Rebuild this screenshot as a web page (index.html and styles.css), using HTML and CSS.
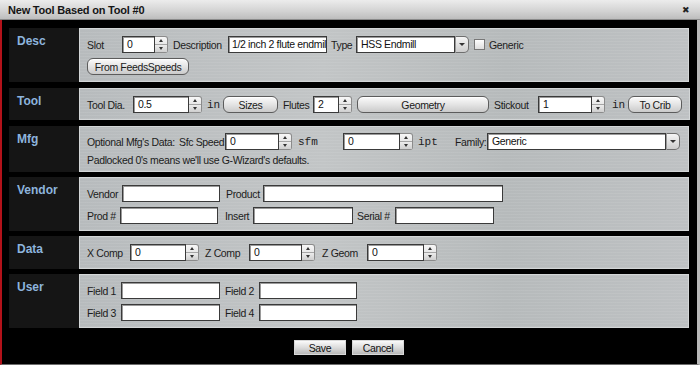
FILE: index.html
```html
<!DOCTYPE html>
<html lang="en">
<head>
    <meta charset="UTF-8">
    <meta name="viewport" content="width=device-width, initial-scale=1.0">
    <link rel="stylesheet" href="styles.css">
    <title>New Tool Based on Tool #0</title>
</head>
<body>
<div class="dialog">
    <div class="titlebar">
        <span class="title">New Tool Based on Tool #0</span>
        <span class="close">&#x2716;</span>
    </div>

    <div class="content">
        <!-- Desc -->
        <div class="section spaced">
            <div class="section-name">Desc</div>
            <div class="panel">
                <div class="line cols-desc">
                    <span class="lbl">Slot</span>
                    <div class="spin w46"><span class="field">0</span><span class="arrows"><i class="up"></i><i class="dn"></i></span></div>
                    <span class="lbl">Description</span>
                    <span class="field w99 clip">1/2 inch 2 flute endmill</span>
                    <span class="lbl">Type</span>
                    <div class="select w113"><span class="field">HSS Endmill</span><span class="drop"><i class="dn"></i></span></div>
                    <span class="check"></span>
                    <span class="lbl">Generic</span>
                </div>
                <div class="line">
                    <span class="btn w102">From FeedsSpeeds</span>
                </div>
            </div>
        </div>

        <!-- Tool -->
        <div class="section spaced">
            <div class="section-name">Tool</div>
            <div class="panel">
                <div class="line cols-tool">
                    <span class="lbl">Tool Dia.</span>
                    <div class="spin w69"><span class="field">0.5</span><span class="arrows"><i class="up"></i><i class="dn"></i></span></div>
                    <span class="unit">in</span>
                    <span class="btn w55">Sizes</span>
                    <span class="lbl">Flutes</span>
                    <div class="spin w39"><span class="field">2</span><span class="arrows"><i class="up"></i><i class="dn"></i></span></div>
                    <span class="btn w132">Geometry</span>
                    <span class="lbl">Stickout</span>
                    <div class="spin w67"><span class="field">1</span><span class="arrows"><i class="up"></i><i class="dn"></i></span></div>
                    <span class="unit">in</span>
                    <span class="btn w54">To Crib</span>
                </div>
            </div>
        </div>

        <!-- Mfg -->
        <div class="section">
            <div class="section-name">Mfg</div>
            <div class="panel panel-mfg">
                <div class="line cols-mfg">
                    <span class="lbl">Optional Mfg's Data:</span>
                    <span class="lbl">Sfc Speed</span>
                    <div class="spin w67"><span class="field">0</span><span class="arrows"><i class="up"></i><i class="dn"></i></span></div>
                    <span class="unit">sfm</span>
                    <div class="spin w70"><span class="field">0</span><span class="arrows"><i class="up"></i><i class="dn"></i></span></div>
                    <span class="unit">ipt</span>
                    <span class="lbl">Family:</span>
                    <div class="select w193"><span class="field">Generic</span><span class="drop"><i class="dn"></i></span></div>
                </div>
                <div class="line line-note">
                    <span class="lbl">Padlocked 0's means we'll use G-Wizard's defaults.</span>
                </div>
            </div>
        </div>

        <!-- Vendor -->
        <div class="section">
            <div class="section-name">Vendor</div>
            <div class="panel">
                <div class="line cols-vendor1">
                    <span class="lbl">Vendor</span>
                    <span class="field w98"></span>
                    <span class="lbl">Product</span>
                    <span class="field w240"></span>
                </div>
                <div class="line cols-vendor2">
                    <span class="lbl">Prod #</span>
                    <span class="field w98"></span>
                    <span class="lbl">Insert</span>
                    <span class="field w100"></span>
                    <span class="lbl">Serial #</span>
                    <span class="field w99"></span>
                </div>
            </div>
        </div>

        <!-- Data -->
        <div class="section">
            <div class="section-name">Data</div>
            <div class="panel panel-single">
                <div class="line cols-data">
                    <span class="lbl">X Comp</span>
                    <div class="spin w69"><span class="field">0</span><span class="arrows"><i class="up"></i><i class="dn"></i></span></div>
                    <span class="lbl">Z Comp</span>
                    <div class="spin w66"><span class="field">0</span><span class="arrows"><i class="up"></i><i class="dn"></i></span></div>
                    <span class="lbl">Z Geom</span>
                    <div class="spin w70"><span class="field">0</span><span class="arrows"><i class="up"></i><i class="dn"></i></span></div>
                </div>
            </div>
        </div>

        <!-- User -->
        <div class="section">
            <div class="section-name">User</div>
            <div class="panel">
                <div class="line cols-user">
                    <span class="lbl">Field 1</span>
                    <span class="field w99"></span>
                    <span class="lbl">Field 2</span>
                    <span class="field w98"></span>
                </div>
                <div class="line cols-user">
                    <span class="lbl">Field 3</span>
                    <span class="field w99"></span>
                    <span class="lbl">Field 4</span>
                    <span class="field w98"></span>
                </div>
            </div>
        </div>

        <div class="footer">
            <span class="flat-btn">Save</span>
            <span class="flat-btn">Cancel</span>
        </div>
    </div>
</div>
</body>
</html>
```

FILE: styles.css
```css
body {
    margin: 0;
    background: #000;
    font-family: "Liberation Sans", Arial, sans-serif;
    font-size: 10.5px;
    letter-spacing: -0.35px;
    color: #1a1a1a;
}

.dialog {
    width: 700px;
    height: 365px;
    display: flex;
    flex-direction: column;
}

/* Title bar */
.titlebar {
    height: 20px;
    flex: none;
    display: flex;
    align-items: center;
    justify-content: space-between;
    padding: 0 10px 0 8px;
    background: linear-gradient(#ececec, #d2d2d2 60%, #bdbdbd);
    border-bottom: 1px solid #8a8a8a;
    box-sizing: border-box;
}

.title {
    font-weight: bold;
    font-size: 11px;
    letter-spacing: -0.2px;
    color: #151515;
}

.close {
    font-size: 9px;
    color: #222;
}

/* Main area */
.content {
    flex: 1;
    display: flex;
    flex-direction: column;
    gap: 5px;
    padding: 8px 8px 0 7px;
    border-left: 2px solid #b3121a;
    border-right: 3px solid #b9b9b9;
    border-bottom: 1px solid #6d6d6d;
    background: #000;
}

.section {
    display: flex;
}

.spaced {
    margin-bottom: 1px;
}

.section-name {
    width: 70px;
    flex: none;
    background: #151515;
    color: #8db4dd;
    font-weight: bold;
    font-size: 12px;
    letter-spacing: 0;
    padding: 6px 0 0 8px;
    box-sizing: border-box;
}

.panel {
    flex: 1;
    display: flex;
    flex-direction: column;
    gap: 5px;
    padding: 7px 7px 6px 7px;
    border: 1px solid #d3d6d7;
    background:
        repeating-linear-gradient(0deg, rgba(255, 255, 255, 0.07) 0 1px, transparent 1px 3px),
        linear-gradient(90deg, #b7bbbd, #c2c5c6 40%, #b6babb 70%, #bec1c3);
}

.panel-single {
    padding-bottom: 7px;
}

.panel-mfg {
    gap: 3px;
    padding-top: 6px;
    padding-bottom: 5px;
}

.line {
    height: 17px;
    display: grid;
    align-items: center;
    justify-items: start;
    grid-auto-flow: column;
}

.line-note {
    height: 13px;
}

.cols-desc    { grid-template-columns: 35px 51px 55px 103px 25px 118px 15px auto; }
.cols-tool    { grid-template-columns: 46px 74px 16px 60px 30px 44px 137px 44px 74px 16px auto; }
.cols-mfg     { grid-template-columns: 92px 46px 73px 45px 75px 37px 32px auto; }
.cols-vendor1 { grid-template-columns: 35px 104px 37px auto; }
.cols-vendor2 { grid-template-columns: 33px 105px 28px 104px 38px auto; }
.cols-data    { grid-template-columns: 43px 75px 44px 73px 45px auto; }
.cols-user    { grid-template-columns: 34px 104px 34px auto; }

.lbl {
    white-space: nowrap;
    color: #1c1c1c;
}

.unit {
    font-family: "Liberation Mono", "Courier New", monospace;
    font-size: 11px;
    letter-spacing: 0;
    color: #222;
}

/* Inputs */
.field {
    height: 17px;
    box-sizing: border-box;
    background: #fff;
    border: 1px solid #3a3a3a;
    box-shadow: inset 1px 1px 0 #9a9a9a;
    padding: 0 3px 0 4px;
    line-height: 15px;
    color: #111;
    white-space: nowrap;
    overflow: hidden;
}

.clip {
    padding-left: 3px;
    padding-right: 0;
    text-overflow: clip;
}

.spin,
.select {
    display: flex;
    height: 17px;
}

.spin .field,
.select .field {
    flex: 1;
    min-width: 0;
}

.arrows {
    width: 13px;
    flex: none;
    display: flex;
    flex-direction: column;
    box-sizing: border-box;
    border: 1px solid #8b8b8b;
    border-left: none;
    border-radius: 0 3px 3px 0;
    background: linear-gradient(#f7f7f7, #d8d8d8);
}

.arrows i,
.drop i {
    flex: 1;
    display: flex;
    align-items: center;
    justify-content: center;
}

.arrows i + i {
    border-top: 1px solid #a5a5a5;
    background: linear-gradient(#ececec, #cfcfcf);
}

.up::before,
.dn::before {
    content: "";
    border-left: 2px solid transparent;
    border-right: 2px solid transparent;
}

.up::before {
    border-bottom: 3px solid #333;
}

.dn::before {
    border-top: 3px solid #333;
}

.drop {
    width: 14px;
    flex: none;
    display: flex;
    box-sizing: border-box;
    border: 1px solid #6e6e6e;
    border-left: 1px solid #9a9a9a;
    border-radius: 0 5px 5px 0;
    background: linear-gradient(#f5f5f5, #cdcdcd);
}

.drop .dn::before {
    border-left-width: 3px;
    border-right-width: 3px;
}

.check {
    width: 11px;
    height: 11px;
    box-sizing: border-box;
    border: 1px solid #777;
    background: linear-gradient(#fdfdfd, #dedede);
}

/* Buttons */
.btn {
    height: 17px;
    box-sizing: border-box;
    display: flex;
    align-items: center;
    justify-content: center;
    border: 1px solid #5c5c5c;
    border-radius: 6px;
    background: linear-gradient(#fbfbfb, #e4e4e4 50%, #cacaca);
    box-shadow: inset 0 1px 0 #fff;
    color: #1a1a1a;
    white-space: nowrap;
}

.w39  { width: 39px; }
.w46  { width: 46px; }
.w54  { width: 54px; }
.w55  { width: 55px; }
.w66  { width: 66px; }
.w67  { width: 67px; }
.w69  { width: 69px; }
.w70  { width: 70px; }
.w98  { width: 98px; }
.w99  { width: 99px; }
.w100 { width: 100px; }
.w102 { width: 102px; }
.w113 { width: 113px; }
.w132 { width: 132px; }
.w193 { width: 193px; }
.w240 { width: 240px; }

/* Footer */
.footer {
    display: flex;
    justify-content: center;
    gap: 6px;
    margin-top: 7px;
}

.flat-btn {
    width: 52px;
    height: 15px;
    display: flex;
    align-items: center;
    justify-content: center;
    background: linear-gradient(#fafafa, #dcdcdc 50%, #b9b9b9);
    border: 1px solid #d8d8d8;
    box-sizing: border-box;
    color: #111;
}
```
